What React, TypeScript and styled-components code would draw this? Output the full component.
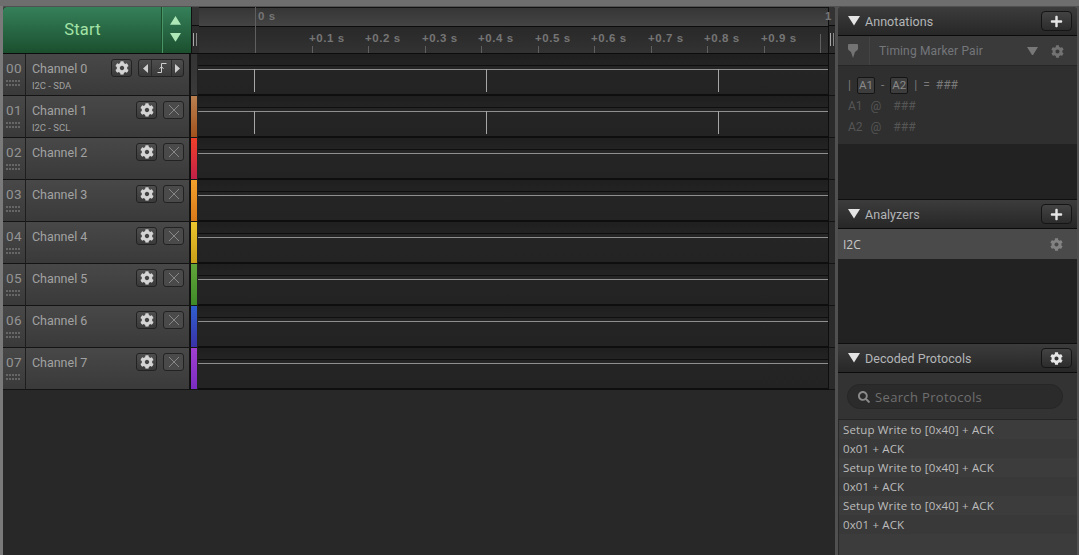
import React from "react";
import styled, { createGlobalStyle } from "styled-components";
import { FaCog, FaPlus, FaSearch } from "react-icons/fa";

const Global = createGlobalStyle`
  html, body { margin: 0; padding: 0; height: 555px; overflow: hidden; background: #747474; }
  #root { height: 555px; }
  * { box-sizing: border-box; }
`;

const Page = styled.div`
  width: 1079px;
  height: 555px;
  padding: 7px 2px 0 3px;
  display: flex;
  gap: 3px;
  font-family: Roboto, "Liberation Sans", sans-serif;
  background:
    linear-gradient(#6e6e6e 0, #6e6e6e 6px, transparent 6px),
    linear-gradient(90deg, #7a7a7a 3px, #505050 3px);
`;

const Main = styled.div`
  width: 832px;
  display: flex;
  flex-direction: column;
  background: #282828;
  border-radius: 3px 3px 0 0;
  overflow: hidden;
`;

const TopBar = styled.div`
  height: 47px;
  display: flex;
  border-bottom: 1px solid #0c0c0c;
`;

const StartGroup = styled.div`
  width: 188px;
  display: flex;
  background: linear-gradient(#35805a, #1b4f2e);
  border-radius: 4px 0 0 0;
`;

const StartLabel = styled.div`
  flex: 1;
  display: flex;
  align-items: center;
  justify-content: center;
  color: #a4e2a6;
  font-size: 16.5px;
  letter-spacing: 0.2px;
  padding: 0 0 2px 1px;
  border-right: 1px solid #1c4d2c;
`;

const Stepper = styled.div`
  width: 29px;
  display: flex;
  flex-direction: column;
  align-items: center;
  justify-content: center;
  gap: 8px;
  padding-bottom: 2px;
  padding-right: 3px;
  border-left: 1px solid #4a9566;
`;

const StripTop = styled.div`
  width: 8px;
  display: flex;
  flex-direction: column;
  background: #2c2c2c;
  border-left: 1px solid #111;
`;

const StripTopSlot = styled.div`
  height: 19px;
  background: #333;
  border-bottom: 1px solid #0c0c0c;
`;

const Grip = styled.div`
  width: 4px;
  height: 13px;
  margin: 7px 0 0 1px;
  border-left: 1px solid #aaa;
  border-right: 1px solid #888;
`;

const Ruler = styled.div`
  position: relative;
  flex: 1;
  display: flex;
  flex-direction: column;
`;

const RulerTop = styled.div`
  height: 20px;
  background: linear-gradient(#363636, #444);
  border-top: 1px solid #111;
  border-bottom: 1px solid #0c0c0c;
`;

const RulerBottom = styled.div`
  flex: 1;
  background: linear-gradient(#292929, #323232);
`;

const TimeLabel = styled.span`
  position: absolute;
  font-family: "Liberation Sans", sans-serif;
  font-weight: 700;
  font-size: 11.5px;
  line-height: 13px;
  letter-spacing: 0.55px;
  color: #757575;
  white-space: nowrap;
`;

const Tick = styled.span`
  position: absolute;
  width: 1px;
  bottom: 0;
  background: #5f5f5f;
`;

const EdgeColumn = styled.div`
  width: 7px;
  display: flex;
  flex-direction: column;
  background: #2b2b2b;
  border-left: 1px solid #0e0e0e;
`;

const Row = styled.div`
  height: 42px;
  display: flex;
`;

const NumberCell = styled.div`
  width: 23px;
  display: flex;
  flex-direction: column;
  align-items: center;
  padding-top: 6px;
  background: linear-gradient(#484848, #3a3a3a);
  border-right: 1px solid #1e1e1e;
  border-bottom: 1px solid #141414;
  color: #949494;
  font-size: 13.5px;
  line-height: 17px;
  letter-spacing: 0.3px;
`;

const Dots = styled.svg`
  display: block;
  margin-top: 3px;
`;

const ChannelCell = styled.div`
  width: 165px;
  display: flex;
  padding: 5px 5px 0 6px;
  background: linear-gradient(#484848, #3a3a3a);
  border-bottom: 1px solid #141414;
  border-right: 1px solid #121212;
`;

const ChannelText = styled.div`
  flex: 1;
  display: flex;
  flex-direction: column;
  padding-top: 1px;
`;

const ChannelName = styled.span`
  color: #a2a2a2;
  font-size: 12.5px;
  line-height: 17px;
`;

const ChannelRole = styled.span`
  color: #a0a0a0;
  font-size: 9.5px;
  line-height: 12px;
  margin-top: 3px;
`;

const Actions = styled.div`
  display: flex;
  gap: 6px;
  height: 18px;
`;

const IconButton = styled.div<{ $dim?: boolean; $wide?: boolean }>`
  width: ${(p) => (p.$wide ? 46 : 21)}px;
  height: 18px;
  display: flex;
  align-items: center;
  justify-content: center;
  border-radius: 3px;
  border: 1px solid #222;
  background: ${(p) => (p.$dim ? "#4a4a4a" : "linear-gradient(#4e4e4e, #3a3a3a)")};
  color: #d4d4d4;
  font-size: 14px;
`;

const EdgeSegment = styled.div<{ $grow?: boolean }>`
  width: ${(p) => (p.$grow ? "auto" : "12px")};
  flex: ${(p) => (p.$grow ? 1 : "none")};
  height: 100%;
  display: flex;
  align-items: center;
  justify-content: center;
  & + & { border-left: 1px solid #2a2a2a; }
`;

const ColorStrip = styled.div<{ $from: string; $to: string }>`
  width: 8px;
  border-left: 1px solid #111;
  border-right: 1px solid #222;
  border-bottom: 1px solid #141414;
  background: linear-gradient(${(p) => p.$from}, ${(p) => p.$to});
`;

const WaveCell = styled.div`
  flex: 1;
  background: linear-gradient(#1f1f1f 0, #232323 11px, #0f0f0f 11px, #0f0f0f 12px, #252525 12px, #232323 40px, #0e0e0e 40px);
`;

const WaveSvg = styled.svg`
  display: block;
`;

const EdgeSlot = styled.div`
  height: 42px;
  border-bottom: 1px solid #141414;
`;

const Side = styled.div`
  width: 239px;
  display: flex;
  flex-direction: column;
  background: #222;
  border-radius: 4px 4px 0 0;
  overflow: hidden;
`;

const PanelHeader = styled.div`
  height: 29px;
  flex: none;
  display: flex;
  align-items: center;
  padding: 0 5px 0 10px;
  background: linear-gradient(#3c3c3c, #272727);
  border-bottom: 1px solid #0b0b0b;
`;

const PanelTitle = styled.span`
  flex: 1;
  margin-left: 5px;
  color: #b4b6b8;
  font-size: 12.5px;
  letter-spacing: 0.05px;
  padding-top: 1px;
`;

const HeaderButton = styled.div`
  width: 31px;
  height: 20px;
  display: flex;
  align-items: center;
  justify-content: center;
  border-radius: 4px;
  border: 1px solid #151515;
  background: linear-gradient(#434343, #2c2c2c);
  color: #e6e6e6;
  font-size: 13px;
`;

const MarkerBar = styled.div`
  height: 30px;
  flex: none;
  display: flex;
  align-items: center;
  padding: 1px 13px 0 10px;
  background: #3a3a3a;
  border-bottom: 1px solid #262626;
  color: #74767a;
`;

const MarkerDivider = styled.span`
  width: 1px;
  align-self: stretch;
  margin-left: 11px;
  background: #444;
`;

const MarkerTitle = styled.span`
  flex: 1;
  margin-left: 9px;
  font-size: 12px;
  letter-spacing: 0.15px;
`;

const MarkerGear = styled.span`
  margin-left: 13px;
  display: flex;
  color: #727272;
  font-size: 13px;
`;

const AnnotationBody = styled.div`
  height: 78px;
  flex: none;
  padding: 10px 10px 0;
  background: #2f2f2f;
  display: flex;
  flex-direction: column;
  gap: 3px;
`;

const MeasureLine = styled.div<{ $dim?: boolean }>`
  display: flex;
  align-items: center;
  height: 18px;
  gap: ${(p) => (p.$dim ? 8 : 6)}px;
  font-size: 12px;
  color: ${(p) => (p.$dim ? "#555" : "#7a7a7a")};
`;

const MarkerTag = styled.span`
  width: 18px;
  height: 17px;
  display: flex;
  align-items: center;
  justify-content: center;
  border-radius: 2px;
  border: 1px solid #151515;
  background: #3d3d3d;
  color: #8a8a8a;
  font-size: 11.5px;
`;

const Hashes = styled.span`
  margin-left: 4px;
`;

const PanelFill = styled.div<{ $h: number }>`
  height: ${(p) => p.$h}px;
  flex: none;
  background: #222;
  border-bottom: 1px solid #0f0f0f;
`;

const AnalyzerRow = styled.div`
  height: 30px;
  flex: none;
  display: flex;
  align-items: center;
  justify-content: space-between;
  padding: 0 14px 0 5px;
  background: #4a4a4a;
  color: #c8c8c8;
  font-family: "Open Sans", sans-serif;
  font-size: 12px;
  & svg { color: #838383; }
`;

const SearchArea = styled.div`
  height: 46px;
  flex: none;
  padding: 11px 14px 0 9px;
  background: #333;
`;

const SearchBox = styled.div`
  height: 25px;
  display: flex;
  align-items: center;
  gap: 5px;
  padding-left: 10px;
  border-radius: 13px;
  background: #2b2b2b;
  border: 1px solid #262626;
  color: #6f6f6f;
  font-family: "Open Sans", sans-serif;
  font-size: 13px;
  letter-spacing: 0.35px;
  & svg { color: #8a8a8a; }
`;

const ProtocolList = styled.div`
  flex: 1;
  background: #3c3c3c;
  border-top: 1px solid #252525;
  border-left: 1px solid #2a2a2a;
`;

const ProtocolRow = styled.div`
  height: 19px;
  display: flex;
  align-items: center;
  padding-left: 4px;
  color: #bcbcbc;
  font-family: "Open Sans", sans-serif;
  font-size: 11.5px;
  letter-spacing: 0.14px;
  white-space: nowrap;
  &:nth-child(even) { background: #393939; }
`;

const Triangle = ({ size = 12, up = false, color = "#e4e4e4" }: { size?: number; up?: boolean; color?: string }) => (
  <svg width={size} height={size * 0.8} viewBox="0 0 10 8" style={{ flex: "none" }}>
    <polygon points={up ? "5,0 10,8 0,8" : "0,0 10,0 5,8"} fill={color} />
  </svg>
);

const CloseIcon = () => (
  <svg width="12" height="12" viewBox="0 0 12 12">
    <path d="M1 1 L11 11 M11 1 L1 11" stroke="#8e8e8e" strokeWidth="0.9" fill="none" />
  </svg>
);

const EdgeIcon = () => (
  <svg width="10" height="12" viewBox="0 0 10 12">
    <path d="M0.5 10.5 H4.5 V1.5 H9.5" stroke="#d0d0d0" strokeWidth="1" fill="none" />
    <path d="M2.5 6.8 L4.5 4.6 L6.5 6.8" stroke="#d0d0d0" strokeWidth="1" fill="none" />
  </svg>
);

const SmallArrow = ({ left }: { left: boolean }) => (
  <svg width="5" height="9" viewBox="0 0 5 9">
    <polygon points={left ? "5,0 5,9 0,4.5" : "0,0 0,9 5,4.5"} fill="#cfcfcf" />
  </svg>
);

const GripDots = () => (
  <Dots width="15" height="6" viewBox="0 0 15 6">
    {[0, 4].map((y) =>
      [0, 3, 6, 9, 12].map((x) => <rect key={`${x}-${y}`} x={x} y={y} width="2" height="2" fill="#666" />)
    )}
  </Dots>
);

const PinIcon = () => (
  <svg width="10" height="14" viewBox="0 0 10 14" style={{ flex: "none" }}>
    <path d="M1 0 H9 Q10 0 10 1 V5 Q10 6 7 8 L5 14 L3 8 Q0 6 0 5 V1 Q0 0 1 0 Z" fill="#737373" />
  </svg>
);

const PULSES = [56, 288, 520];
const TICKS = [113, 169, 226, 282, 339, 395, 452, 508, 565];

const channels = [
  { name: "Channel 0", role: "I2C - SDA", from: "#343434", to: "#3a3a3a", active: true },
  { name: "Channel 1", role: "I2C - SCL", from: "#bb8050", to: "#a2521c", active: true },
  { name: "Channel 2", role: "", from: "#f0402a", to: "#c22048", active: false },
  { name: "Channel 3", role: "", from: "#f3a12c", to: "#d9791a", active: false },
  { name: "Channel 4", role: "", from: "#ecc62e", to: "#caa018", active: false },
  { name: "Channel 5", role: "", from: "#62a63a", to: "#3f8a28", active: false },
  { name: "Channel 6", role: "", from: "#2f5fce", to: "#3a32a8", active: false },
  { name: "Channel 7", role: "", from: "#a040d0", to: "#7a2cc0", active: false },
];

const protocols = [
  "Setup Write to [0x40] + ACK",
  "0x01 + ACK",
  "Setup Write to [0x40] + ACK",
  "0x01 + ACK",
  "Setup Write to [0x40] + ACK",
  "0x01 + ACK",
];

export default function App() {
  return (
    <Page>
      <Global />
      <Main>
        <TopBar>
          <StartGroup>
            <StartLabel>Start</StartLabel>
            <Stepper>
              <Triangle size={11} up color="#aee8b6" />
              <Triangle size={11} color="#aee8b6" />
            </Stepper>
          </StartGroup>
          <StripTop>
            <StripTopSlot />
            <Grip />
          </StripTop>
          <Ruler>
            <RulerTop />
            <RulerBottom />
            <Tick style={{ left: 56, top: 0 }} />
            <TimeLabel style={{ left: 59, top: 3 }}>0 s</TimeLabel>
            <TimeLabel style={{ left: 626, top: 3 }}>1</TimeLabel>
            <Tick style={{ left: 621, top: 27 }} />
            {TICKS.map((x, i) => (
              <React.Fragment key={x}>
                <TimeLabel style={{ left: x - 3, top: 25 }}>{`+0.${i + 1} s`}</TimeLabel>
                <Tick style={{ left: x, height: 7 }} />
              </React.Fragment>
            ))}
          </Ruler>
          <EdgeColumn>
            <StripTopSlot />
            <Grip />
          </EdgeColumn>
        </TopBar>
        {channels.map((c, i) => (
          <Row key={c.name}>
            <NumberCell>
              {`0${i}`}
              <GripDots />
            </NumberCell>
            <ChannelCell>
              <ChannelText>
                <ChannelName>{c.name}</ChannelName>
                {c.role && <ChannelRole>{c.role}</ChannelRole>}
              </ChannelText>
              <Actions>
                <IconButton>
                  <FaCog />
                </IconButton>
                {i === 0 ? (
                  <IconButton $wide>
                    <EdgeSegment>
                      <SmallArrow left />
                    </EdgeSegment>
                    <EdgeSegment $grow>
                      <EdgeIcon />
                    </EdgeSegment>
                    <EdgeSegment>
                      <SmallArrow left={false} />
                    </EdgeSegment>
                  </IconButton>
                ) : (
                  <IconButton $dim>
                    <CloseIcon />
                  </IconButton>
                )}
              </Actions>
            </ChannelCell>
            <ColorStrip $from={c.from} $to={c.to} />
            <WaveCell>
              <WaveSvg width="630" height="42">
                <line x1="0" x2="630" y1="15.5" y2="15.5" stroke="#8f8f8f" strokeWidth="1" />
                {c.active &&
                  PULSES.map((x) => (
                    <line key={x} x1={x + 0.5} x2={x + 0.5} y1="15" y2="38" stroke="#a6a6a6" strokeWidth="1" />
                  ))}
              </WaveSvg>
            </WaveCell>
            <EdgeColumn>
              <EdgeSlot />
            </EdgeColumn>
          </Row>
        ))}
      </Main>
      <Side>
        <PanelHeader>
          <Triangle size={12} />
          <PanelTitle>Annotations</PanelTitle>
          <HeaderButton>
            <FaPlus />
          </HeaderButton>
        </PanelHeader>
        <MarkerBar>
          <PinIcon />
          <MarkerDivider />
          <MarkerTitle>Timing Marker Pair</MarkerTitle>
          <Triangle size={11} color="#787878" />
          <MarkerGear>
            <FaCog />
          </MarkerGear>
        </MarkerBar>
        <AnnotationBody>
          <MeasureLine>
            <span>|</span>
            <MarkerTag>A1</MarkerTag>
            <span>-</span>
            <MarkerTag>A2</MarkerTag>
            <span>|</span>
            <span>=</span>
            <span>###</span>
          </MeasureLine>
          <MeasureLine $dim>
            A1 <span>@</span> <Hashes>###</Hashes>
          </MeasureLine>
          <MeasureLine $dim>
            A2 <span>@</span> <Hashes>###</Hashes>
          </MeasureLine>
        </AnnotationBody>
        <PanelFill $h={56} />
        <PanelHeader>
          <Triangle size={12} />
          <PanelTitle>Analyzers</PanelTitle>
          <HeaderButton>
            <FaPlus />
          </HeaderButton>
        </PanelHeader>
        <AnalyzerRow>
          I2C
          <FaCog size={13} />
        </AnalyzerRow>
        <PanelFill $h={85} />
        <PanelHeader>
          <Triangle size={12} />
          <PanelTitle>Decoded Protocols</PanelTitle>
          <HeaderButton>
            <FaCog />
          </HeaderButton>
        </PanelHeader>
        <SearchArea>
          <SearchBox>
            <FaSearch size={12} />
            Search Protocols
          </SearchBox>
        </SearchArea>
        <ProtocolList>
          {protocols.map((p, i) => (
            <ProtocolRow key={i}>{p}</ProtocolRow>
          ))}
        </ProtocolList>
      </Side>
    </Page>
  );
}
